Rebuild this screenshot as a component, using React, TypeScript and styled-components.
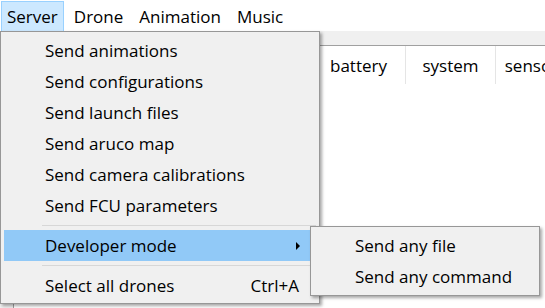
import * as React from 'react';
import styled, { createGlobalStyle } from 'styled-components';

const GlobalStyle = createGlobalStyle`
html, body {
margin: 0;
padding: 0;
background: #f0f0f0;
font-family: "Open Sans", "Noto Sans", sans-serif;
font-size: 17px;
color: #000;
}
`

const Window = styled.div`
position: relative;
width: 545px;
height: 308px;
overflow: hidden;
display: flex;
flex-direction: column;
`

const MenuBar = styled.div`
height: 31px;
background: #fff;
display: flex;
align-items: flex-start;
padding: 1px 0 0 1px;
box-sizing: border-box;
`

const MenuBarItem = styled.div<{ $active?: boolean }>`
height: 29px;
line-height: 29px;
padding: 0 5px;
margin-right: 4px;
border: 1px solid ${p => (p.$active ? '#99d1ff' : 'transparent')};
background: ${p => (p.$active ? '#cce8ff' : 'transparent')};
`

const Body = styled.div`
flex: 1;
padding: 14px 0 0 13px;
display: flex;
`

const Table = styled.div`
flex: 1;
background: #fff;
border-left: 1px solid #a0a0a0;
border-top: 1px solid #a0a0a0;
overflow: hidden;
`

const HeaderRow = styled.div`
display: grid;
grid-template-columns: 100px 100px 98px 94px 90px 80px 90px;
height: 38px;
`

const HeaderCell = styled.div`
display: flex;
align-items: center;
justify-content: center;
border-right: 1px solid #e5e5e5;
white-space: nowrap;
`

const Dropdown = styled.div`
position: absolute;
left: 0;
top: 31px;
width: 320px;
box-sizing: border-box;
padding: 3px 3px 2px 3px;
background: #f0f0f0;
border: 1px solid #979797;
box-shadow: 2px 2px 3px rgba(0, 0, 0, 0.35);
`

const MenuItem = styled.div<{ $highlight?: boolean }>`
position: relative;
height: 31px;
display: flex;
align-items: center;
padding: 0 17px 0 41px;
background: ${p => (p.$highlight ? '#91c9f7' : 'transparent')};
white-space: nowrap;
`

const Label = styled.span`
flex: 1;
`

const Shortcut = styled.span``

const Arrow = styled.span`
width: 0;
height: 0;
margin-right: -1px;
border-left: 4px solid #000;
border-top: 4px solid transparent;
border-bottom: 4px solid transparent;
`

const Separator = styled.div`
height: 9px;
display: flex;
align-items: center;
padding-left: 38px;
&::after {
content: '';
flex: 1;
height: 1px;
background: #d7d7d7;
}
`

const Submenu = styled.div`
position: absolute;
left: 306px;
top: -4px;
width: 230px;
box-sizing: border-box;
padding: 3px;
background: #f0f0f0;
border: 1px solid #979797;
box-shadow: 2px 2px 3px rgba(0, 0, 0, 0.35);
z-index: 2;
`

// first three columns sit under the open menu
const headers = ['', '', '', 'battery', 'system', 'sensors', 'mode'];

const items = [
    'Send animations',
    'Send configurations',
    'Send launch files',
    'Send aruco map',
    'Send camera calibrations',
    'Send FCU parameters',
];

export default function App() {
    return (
        <Window>
            <GlobalStyle />
            <MenuBar>
                <MenuBarItem $active>Server</MenuBarItem>
                <MenuBarItem>Drone</MenuBarItem>
                <MenuBarItem>Animation</MenuBarItem>
                <MenuBarItem>Music</MenuBarItem>
            </MenuBar>

            <Body>
                <Table>
                    <HeaderRow>
                        {headers.map((h, i) => (
                            <HeaderCell key={i}>{h}</HeaderCell>
                        ))}
                    </HeaderRow>
                </Table>
            </Body>

            <Dropdown>
                {items.map(i => (
                    <MenuItem key={i}>
                        <Label>{i}</Label>
                    </MenuItem>
                ))}
                <Separator />
                <MenuItem $highlight>
                    <Label>Developer mode</Label>
                    <Arrow />
                    <Submenu>
                        <MenuItem>Send any file</MenuItem>
                        <MenuItem>Send any command</MenuItem>
                    </Submenu>
                </MenuItem>
                <Separator />
                <MenuItem>
                    <Label>Select all drones</Label>
                    <Shortcut>Ctrl+A</Shortcut>
                </MenuItem>
            </Dropdown>
        </Window>
    );
}
